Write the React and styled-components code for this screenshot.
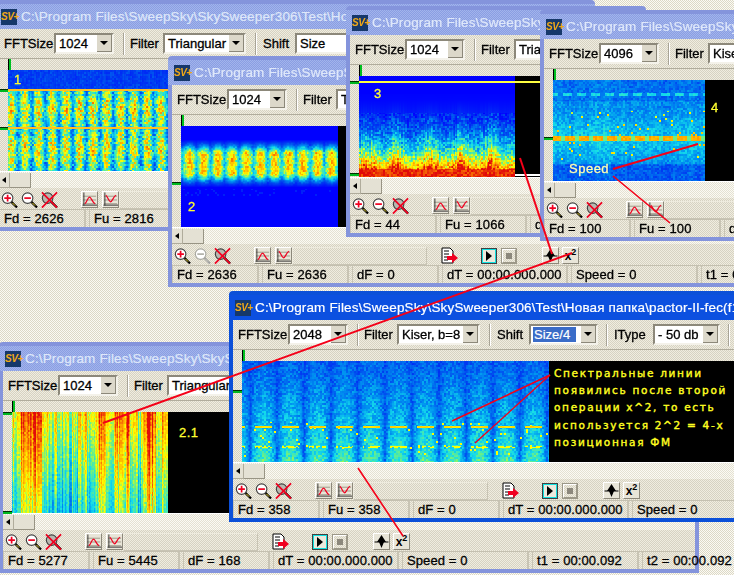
import React, { useLayoutEffect, useRef } from "react";
import styled, { createGlobalStyle, css } from "styled-components";

const GlobalStyle = createGlobalStyle`
  html, body {
    margin: 0;
    padding: 0;
    overflow: hidden;
    background: #ffffff;
  }
  * {
    box-sizing: border-box;
  }
`;

const dither = (a, b) => css`
  background: repeating-conic-gradient(${a} 0 25%, ${b} 0 50%) 0 0 / 2px 2px;
`;

const Desktop = styled.div`
  position: relative;
  width: 734px;
  height: 575px;
  overflow: hidden;
  ${dither("#fbfaf4", "#dcd8c6")}
  font-family: "Liberation Sans", Arial, sans-serif;
  font-size: 13px;
  color: #000;
  -webkit-text-stroke: 0.3px #000;
`;

const Win = styled.div`
  position: absolute;
  left: ${(p) => p.$x}px;
  top: ${(p) => p.$y}px;
  width: ${(p) => p.$w}px;
  display: flex;
  flex-direction: column;
  border: 4px solid ${(p) => (p.$active ? "#0c50d8" : "#8494dc")};
  border-radius: 4px 4px 0 0;
  ${dither("#f0ede0", "#d6d2c2")}
`;

const TitleBar = styled.div`
  height: 25px;
  margin: 0 -4px;
  padding-left: 6px;
  display: flex;
  align-items: center;
  gap: 4px;
  white-space: nowrap;
  overflow: hidden;
  font-size: 13.5px;
  letter-spacing: 0.15px;
  ${(p) =>
    p.$active
      ? css`
          background: #0c50e0;
          color: #fff;
          -webkit-text-stroke: 0.2px #fff;
        `
      : css`
          ${dither("#8a9ee2", "#a2b4ec")}
          color: #dfe8fa;
          -webkit-text-stroke: 0.2px #dfe8fa;
        `}
`;

const AppIcon = styled.span`
  flex: none;
  width: 16px;
  height: 16px;
  background: #16386a;
  color: #f0a818;
  font: italic bold 10px "Liberation Sans", sans-serif;
  letter-spacing: -0.5px;
  line-height: 16px;
  text-align: center;
  -webkit-text-stroke: 0;
`;

const Toolbar = styled.div`
  height: 30px;
  padding: 0 0 0 5px;
  display: flex;
  align-items: center;
  white-space: nowrap;
  border-bottom: 1px solid #b0ac9c;
  overflow: hidden;
`;

const Label = styled.span`
  flex: none;
  width: ${(p) => p.$w}px;
`;

const SelectBox = styled.div`
  flex: none;
  width: ${(p) => p.$w}px;
  height: 21px;
  display: flex;
  align-items: center;
  justify-content: space-between;
  background: #fff;
  border: 2px solid;
  border-color: #8c887a #f4f2ea #f4f2ea #8c887a;
  padding-left: 2px;
  overflow: hidden;
`;

const Picked = styled.span`
  padding: 0 1px;
  ${(p) =>
    p.$selected &&
    css`
      background: #3a6cc8;
      color: #fff;
      -webkit-text-stroke: 0.2px #fff;
      padding-right: 6px;
    `}
`;

const Arrow = styled.span`
  flex: none;
  width: 15px;
  height: 17px;
  display: flex;
  align-items: center;
  justify-content: center;
  background: #dcd8ca;
  border-right: 1px solid #8c887a;
  border-bottom: 1px solid #8c887a;
  &::after {
    content: "";
    border-left: 4px solid transparent;
    border-right: 4px solid transparent;
    border-top: 4px solid #000;
  }
`;

const ToolSep = styled.span`
  flex: none;
  width: 2px;
  height: 22px;
  margin: 0 ${(p) => p.$r}px 0 ${(p) => p.$l}px;
  background: #a8a496;
  border-right: 1px solid #fff;
`;

const Ruler = styled.div`
  position: relative;
  height: 11px;
`;

const Plot = styled.div`
  position: relative;
  height: 101px;
  display: flex;
  padding-left: 9px;
`;

const PlotCanvas = styled.canvas`
  display: block;
  flex: none;
`;

const Void = styled.div`
  flex: 1;
  background: #000;
`;

const TopTick = styled.span`
  position: absolute;
  left: 9px;
  top: 0;
  width: 3px;
  height: 11px;
  background: #00c020;
  border-left: 1px solid #000;
`;

const SideTick = styled.span`
  position: absolute;
  left: 0;
  top: ${(p) => p.$y}px;
  width: 9px;
  height: 3px;
  background: #00b820;
  border-top: 1px solid #003000;
`;

const Level = styled.span`
  position: absolute;
  left: ${(p) => p.$x}px;
  right: 0;
  top: ${(p) => p.$y}px;
  height: 2px;
  background: ${(p) => p.$c};
`;

const PlotTag = styled.span`
  position: absolute;
  left: ${(p) => p.$x}px;
  top: ${(p) => p.$y}px;
  color: ${(p) => p.$c || "#ffff30"};
  -webkit-text-stroke: 0.3px ${(p) => p.$c || "#ffff30"};
  font-size: 13px;
  letter-spacing: 0.5px;
`;

const Note = styled.div`
  position: absolute;
  left: 321px;
  top: 4px;
  color: #ffff20;
  -webkit-text-stroke: 0.4px #ffff20;
  font-family: "DejaVu Sans", sans-serif;
  font-size: 10.5px;
  letter-spacing: 1.7px;
  line-height: 17.2px;
  white-space: nowrap;
`;

const ScrollRow = styled.div`
  height: 17px;
  padding-top: 1px;
  display: flex;
  ${dither("#fbfaf4", "#e4e1d2")}
  border-top: 1px solid #fff;
`;

const ScrollArrow = styled.span`
  flex: none;
  width: 11px;
  height: 15px;
  display: flex;
  align-items: center;
  justify-content: center;
  background: #e4e1d4;
  border-right: 1px solid #b0ac9c;
  border-bottom: 1px solid #b0ac9c;
  &::after {
    content: "";
    border-top: 3px solid transparent;
    border-bottom: 3px solid transparent;
    border-right: 4px solid #000;
  }
`;

const ScrollThumb = styled.span`
  flex: none;
  width: 21px;
  height: 15px;
  background: #e4e1d4;
  border-right: 1px solid #989484;
  border-bottom: 1px solid #989484;
`;

const ButtonRow = styled.div`
  height: 21px;
  padding: 2px 0 0 2px;
  display: flex;
  align-items: center;
  overflow: hidden;
`;

const IconSlot = styled.span`
  flex: none;
  width: ${(p) => p.$w || 18}px;
  height: 18px;
  margin-left: ${(p) => p.$m || 0}px;
  display: flex;
  align-items: center;
  justify-content: center;
`;

const ToolButton = styled(IconSlot)`
  height: 17px;
  background: #e8e5d8;
  border: 1px solid;
  border-color: #fff #8c887a #8c887a #fff;
`;

const PlayButton = styled(IconSlot)`
  height: 16px;
  background: #ece9dc;
  border: 2px solid #10e0e0;
  outline: 1px solid #404040;
  outline-offset: -1px;
`;

const StopButton = styled(IconSlot)`
  height: 16px;
  border: 2px solid;
  border-color: #fff #9c9888 #9c9888 #fff;
  outline: 1px solid #9c9888;
  outline-offset: -1px;
`;

const Square = styled.span`
  width: 6px;
  height: 6px;
  background: #8c887c;
`;

const PowerText = styled.span`
  font: bold 12px "Liberation Sans", sans-serif;
  -webkit-text-stroke: 0;
  sup {
    font-size: 9px;
    line-height: 0;
  }
`;

const LabelTrack = styled.span`
  flex: none;
  width: 135px;
  height: 18px;
  border: 1px solid #eeebde;
  border-bottom-color: #c8c4b4;
  border-right-color: #c8c4b4;
`;

const StatusBar = styled.div`
  height: 18px;
  display: flex;
  white-space: nowrap;
  border-top: 1px solid #c4c0b0;
`;

const StatusCell = styled.span`
  flex: none;
  width: ${(p) => p.$w}px;
  padding-left: 4px;
  margin-right: 3px;
  line-height: 17px;
  letter-spacing: 0.1px;
  border-right: 2px solid #c8c4b4;
  border-left: 1px solid #c8c4b4;
`;

const RedLines = styled.svg`
  position: absolute;
  left: 0;
  top: 0;
  pointer-events: none;
`;

/* spectrogram colours, value 0..1 */
const STOPS = [
  [0, [0, 0, 255]],
  [0.2, [0, 64, 240]],
  [0.38, [0, 150, 240]],
  [0.5, [20, 220, 235]],
  [0.62, [110, 240, 130]],
  [0.72, [255, 255, 0]],
  [0.86, [255, 150, 0]],
  [1, [225, 10, 10]],
];

function colour(v) {
  const t = Math.min(1, Math.max(0, v));
  for (let i = 1; i < STOPS.length; i++) {
    if (t <= STOPS[i][0]) {
      const [a, ca] = STOPS[i - 1];
      const [b, cb] = STOPS[i];
      const k = (t - a) / (b - a);
      return ca.map((c, j) => c + (cb[j] - c) * k);
    }
  }
  return STOPS[STOPS.length - 1][1];
}

function makeRandom(seed) {
  let s = seed;
  return () => {
    s = (s + 0x6d2b79f5) | 0;
    let t = Math.imul(s ^ (s >>> 15), 1 | s);
    t = (t + Math.imul(t ^ (t >>> 7), 61 | t)) ^ t;
    return ((t ^ (t >>> 14)) >>> 0) / 4294967296;
  };
}

const bump = (y, center, half) => Math.max(0, 1 - Math.abs(y - center) / half);

// x, y: pixel, n: 2px noise cell, c: column noise, s: slow column noise
const SPECTRA = {
  one: (x, y, n, c) => {
    if (y < 19) return 0.1 + n * 0.1 + c * 0.08;
    const burst = 0.5 + 0.5 * Math.cos((2 * Math.PI * (x - 3)) / 13.6);
    const band = Math.max(bump(y, 38, 24), bump(y, 78, 24));
    return 0.24 + Math.pow(burst, 0.7) * 0.34 + band * 0.14 + (n - 0.3) * 0.3;
  },
  two: (x, y, n) => {
    if (y < 14 || y > 62) return y > 62 && y < 70 && n > 0.85 ? 0.1 : 0;
    const burst = Math.pow(0.5 + 0.5 * Math.cos((2 * Math.PI * (x - 8)) / 14.2), 0.6);
    const band = Math.min(1, bump(y, 37, 24) * 1.8);
    return band * (0.36 + burst * 0.34 + n * 0.2);
  },
  three: (x, y, n, c) => {
    if (y < 18) return 0;
    const comb = 0.5 + 0.5 * Math.cos((2 * Math.PI * (x - 8)) / 31);
    const depth = Math.pow(y / 100, 2.7);
    const spike = y > 24 ? Math.min(1, (y - 24) / 40) * c * (0.14 + comb * 0.2) : 0;
    if (y > 92) return 0.9 + n * 0.12;
    return depth * (0.9 + comb * 0.1) + spike + (y > 36 ? (n - 0.4) * 0.24 : 0);
  },
  four: (x, y, n, c, s) => {
    if (y > 55 && y < 61) return (x + 2) % 14 < 10 ? 0.8 + n * 0.06 : 0.62;
    if (y > 12 && y < 16) return (x + 4) % 14 < 9 ? 0.46 + n * 0.08 : 0.32;
    const floor = y > 84 ? 0.12 : 0.16;
    const lift = y > 20 && y < 84 ? 0.06 + bump(y, 58, 30) * 0.12 : 0;
    const speck = n > 0.97 && y > 30 && y < 80 ? 0.26 : 0;
    return floor + lift + n * 0.14 + s * 0.14 + speck;
  },
  five: (x, y, n) => {
    const cell = (((x - 7.5) % 27) + 27) % 27;
    const ratio = cell / 27;
    const stripe = Math.pow(Math.sin(Math.PI * ratio), 0.45);
    const dash = cell > 4.5 && cell < 22.5;
    if (y >= 65 && y <= 66 && dash) return 0.74 + n * 0.06;
    if (y >= 85 && y <= 86 && dash && n > 0.3) return 0.72;
    if (y > 60 && y < 96 && n > 0.98) return 0.72;
    return 0.12 + stripe * (0.08 + (0.3 * y) / 100) + n * 0.16;
  },
  six: (x, y, n, c, s) => {
    const fade = 0.78 - (y / 100) * 0.25;
    return fade + (s - 0.5) * 0.7 + (c - 0.5) * 0.36 + (n - 0.5) * 0.1;
  },
};

function Spectrum({ kind, width }) {
  const ref = useRef(null);
  useLayoutEffect(() => {
    const ctx = ref.current.getContext("2d");
    const image = ctx.createImageData(width, 101);
    const rand = makeRandom(width * 31 + kind.length * 7 + kind.charCodeAt(1));
    const cols = [];
    const slow = [];
    let drift = 0.5;
    let slowDrift = 0.5;
    for (let i = 0; i < width + 2; i++) {
      if (i % 2 === 0) drift = 0.6 * drift + 0.4 * rand();
      cols.push(drift * 0.5 + rand() * 0.5);
      if (i % 3 === 0) slowDrift = 0.7 * slowDrift + 0.3 * (rand() * 1.1);
      slow.push(slowDrift);
    }
    const rowStep = Math.floor((width + 4) / 2);
    const cells = [];
    for (let i = 0; i < rowStep * 60; i++) cells.push(rand());
    for (let y = 0; y < 101; y++) {
      for (let x = 0; x < width; x++) {
        const n = cells[(x >> 1) + (y >> 1) * rowStep] ?? 0.5;
        const [r, g, b] = colour(SPECTRA[kind](x, y, n, cols[x], slow[x]));
        const o = (y * width + x) * 4;
        image.data[o] = r;
        image.data[o + 1] = g;
        image.data[o + 2] = b;
        image.data[o + 3] = 255;
      }
    }
    ctx.putImageData(image, 0, 0);
  }, [kind, width]);
  return <PlotCanvas ref={ref} width={width} height={101} />;
}

function Lens({ mark, faded }) {
  return (
    <svg width="18" height="18" viewBox="0 0 18 18">
      <line x1="11" y1="11" x2="17" y2="17" stroke={faded ? "#a0a0a0" : "#000"} strokeWidth="2.4" />
      <line x1="12" y1="12" x2="15" y2="15" stroke={faded ? "#d0d0c0" : "#ffe830"} strokeWidth="1" />
      <circle cx="7" cy="7" r="5.6" fill={mark === "x" ? "#b8b8b0" : "#fff"} stroke={faded ? "#a8a8a0" : "#404040"} strokeWidth="1.2" />
      {mark === "plus" && <path d="M3.5 7h7M7 3.5v7" stroke="#f00020" strokeWidth="1.8" />}
      {mark === "minus" && <path d="M3.5 7h7" stroke={faded ? "#b0b0a8" : "#f00020"} strokeWidth="1.8" />}
      {mark === "x" && <path d="M1 1L17 17M17 1L1 17" stroke="#f00020" strokeWidth="1.8" />}
    </svg>
  );
}

function CurveIcon({ path }) {
  return (
    <svg width="16" height="15" viewBox="0 0 16 15">
      <path d="M1 4h14M1 8h14M1 12h14" stroke="#9c9888" strokeWidth="1" />
      <path d="M2 0v14M0.5 13.5H16" stroke="#303030" strokeWidth="1" fill="none" />
      <path d={path} stroke="#f00020" strokeWidth="1.3" fill="none" />
    </svg>
  );
}

function ExportIcon() {
  return (
    <svg width="17" height="17" viewBox="0 0 17 17">
      <path d="M1 1h8l3 3v12H1z" fill="#fff" stroke="#000" />
      <path d="M3 4h5M3 7h5M3 10h4M3 13h4" stroke="#000" />
      <path d="M6 9h5V6l6 5-6 5v-3H6z" fill="#f00020" />
    </svg>
  );
}

function PlayIcon() {
  return (
    <svg width="8" height="10" viewBox="0 0 8 10">
      <path d="M1 0l6 5-6 5z" fill="#000" />
    </svg>
  );
}

function DiodeIcon() {
  return (
    <svg width="15" height="15" viewBox="0 0 15 15">
      <path d="M7.5 1L3 8h9zM5 8h5l-2.5 6z" fill="#000" />
      <path d="M0.5 8h14" stroke="#000" />
    </svg>
  );
}

function IconRow({ faded }) {
  return (
    <ButtonRow>
      <IconSlot $w={17}>
        <Lens mark="plus" />
      </IconSlot>
      <IconSlot $w={17} $m={3}>
        <Lens mark="minus" faded={faded} />
      </IconSlot>
      <IconSlot $w={17} $m={3}>
        <Lens mark="x" />
      </IconSlot>
      <ToolButton $w={17} $m={23}>
        <CurveIcon path="M3 12C5 11 6 5 8 5C10 5 11 11 14 12" />
      </ToolButton>
      <ToolButton $w={17} $m={4}>
        <CurveIcon path="M3 3C5 4 6 10 8 10C10 10 11 4 14 3" />
      </ToolButton>
      <LabelTrack />
      <IconSlot $w={17} $m={14}>
        <ExportIcon />
      </IconSlot>
      <PlayButton $w={16} $m={23}>
        <PlayIcon />
      </PlayButton>
      <StopButton $w={16} $m={4}>
        <Square />
      </StopButton>
      <ToolButton $w={17} $m={25}>
        <DiodeIcon />
      </ToolButton>
      <ToolButton $w={17} $m={3}>
        <PowerText>
          x<sup>2</sup>
        </PowerText>
      </ToolButton>
    </ButtonRow>
  );
}

const STATUS_WIDTHS = [87, 87, 87, 126, 127, 107, 120];

function Window({ x, y, w, active, title, picks, selected, status, plot, extra, faded, sides }) {
  return (
    <Win $x={x} $y={y} $w={w} $active={active}>
      <TitleBar $active={active}>
        <AppIcon>SV+</AppIcon>
        {title}
      </TitleBar>
      <Toolbar>
        <Label $w={50}>FFTSize</Label>
        <SelectBox $w={60}>
          <Picked>{picks[0]}</Picked>
          <Arrow />
        </SelectBox>
        <ToolSep $l={9} $r={5} />
        <Label $w={33}>Filter</Label>
        <SelectBox $w={83}>
          <Picked>{picks[1]}</Picked>
          <Arrow />
        </SelectBox>
        <ToolSep $l={9} $r={6} />
        <Label $w={32}>Shift</Label>
        <SelectBox $w={69}>
          <Picked $selected={selected}>{picks[2]}</Picked>
          <Arrow />
        </SelectBox>
        <ToolSep $l={8} $r={6} />
        <Label $w={39}>IType</Label>
        <SelectBox $w={67}>
          <Picked>{picks[3]}</Picked>
          <Arrow />
        </SelectBox>
        <ToolSep $l={8} $r={0} />
      </Toolbar>
      <Ruler>
        <TopTick />
      </Ruler>
      <Plot>
        <Spectrum kind={plot.kind} width={plot.width} />
        <Void />
        {sides.map((top) => (
          <SideTick key={top} $y={top} />
        ))}
        {extra}
      </Plot>
      <ScrollRow>
        <ScrollArrow />
        <ScrollThumb />
      </ScrollRow>
      <IconRow faded={faded} />
      <StatusBar>
        {status.map((text, i) => (
          <StatusCell key={text} $w={STATUS_WIDTHS[i]}>
            {text}
          </StatusCell>
        ))}
      </StatusBar>
    </Win>
  );
}

const PATH = "C:\\Program Files\\SweepSky\\SkySweeper306\\Test\\Новая папка\\pactor-II-fec(f1).wav";

const RED = [
  [103, 423, 572, 253, 2],
  [520, 158, 552, 254, 2],
  [613, 169, 698, 144, 2],
  [613, 176, 670, 223, 1.6],
  [550, 375, 452, 421, 1.6],
  [550, 375, 475, 443, 1.3],
  [358, 468, 403, 536, 1.6],
];

export default function App() {
  return (
    <Desktop>
      <GlobalStyle />
      <Window
        x={-5}
        y={0}
        w={600}
        title={PATH}
        picks={["1024", "Triangular", "Size", "- 50 db"]}
        plot={{ kind: "one", width: 160 }}
        sides={[19, 57]}
        status={["Fd = 2626", "Fu = 2816", "dF = 190", "dT = 00:00.000.000", "Speed = 0"]}
        extra={
          <>
            <Level $x={9} $y={19} $c="#ffc020" />
            <Level $x={9} $y={57} $c="#ffc020" />
            <PlotTag $x={15} $y={2}>1</PlotTag>
          </>
        }
      />
      <Window
        x={168}
        y={56}
        w={700}
        title={PATH}
        picks={["1024", "Triangular", "Size", "- 50 db"]}
        plot={{ kind: "two", width: 157 }}
        sides={[56]}
        faded
        status={["Fd = 2636", "Fu = 2636", "dF = 0", "dT = 00:00.000.000", "Speed = 0", "t1 = 00:00.092"]}
        extra={<PlotTag $x={16} $y={73}>2</PlotTag>}
      />
      <Window
        x={346}
        y={6}
        w={300}
        title={PATH}
        picks={["1024", "Triangular", "Size", "- 50 db"]}
        plot={{ kind: "three", width: 156 }}
        sides={[5, 97]}
        status={["Fd = 44", "Fu = 1066", "dF = 1022", "dT = 00:00.000.000"]}
        extra={
          <>
            <Level $x={9} $y={5} $c="#ffff40" />
            <Level $x={165} $y={98} $c="#ffffff" />
            <PlotTag $x={24} $y={10}>3</PlotTag>
          </>
        }
      />
      <Window
        x={540}
        y={10}
        w={500}
        title={PATH}
        picks={["4096", "Kiser, b=8", "Size/4", "- 50 db"]}
        plot={{ kind: "four", width: 152 }}
        sides={[57]}
        status={["Fd = 100", "Fu = 100", "dF = 0", "dT = 00:00.000.000"]}
        extra={
          <>
            <PlotTag $x={167} $y={20}>4</PlotTag>
            <PlotTag $x={25} $y={81} $c="#ffffb0">Speed</PlotTag>
          </>
        }
      />
      <Window
        x={-1}
        y={342}
        w={700}
        title={PATH}
        picks={["1024", "Triangular", "Size", "- 50 db"]}
        plot={{ kind: "six", width: 156 }}
        sides={[0, 99]}
        status={["Fd = 5277", "Fu = 5445", "dF = 168", "dT = 00:00.000.000", "Speed = 0", "t1 = 00:00.092", "t2 = 00:00.092"]}
        extra={<PlotTag $x={176} $y={13}>2.1</PlotTag>}
      />
      <Window
        active
        x={229}
        y={291}
        w={700}
        title={PATH}
        picks={["2048", "Kiser, b=8", "Size/4", "- 50 db"]}
        selected
        plot={{ kind: "five", width: 307 }}
        sides={[29]}
        status={["Fd = 358", "Fu = 358", "dF = 0", "dT = 00:00.000.000", "Speed = 0"]}
        extra={
          <Note>
            Спектральные линии
            <br />
            появились после второй
            <br />
            операции x^2, то есть
            <br />
            используется 2^2 = 4-х
            <br />
            позиционная ФМ
          </Note>
        }
      />
      <RedLines width="734" height="575" viewBox="0 0 734 575">
        {RED.map(([x1, y1, x2, y2, weight]) => (
          <line key={`${x1}-${y1}-${x2}`} x1={x1} y1={y1} x2={x2} y2={y2} stroke="#f40018" strokeWidth={weight} />
        ))}
      </RedLines>
    </Desktop>
  );
}
